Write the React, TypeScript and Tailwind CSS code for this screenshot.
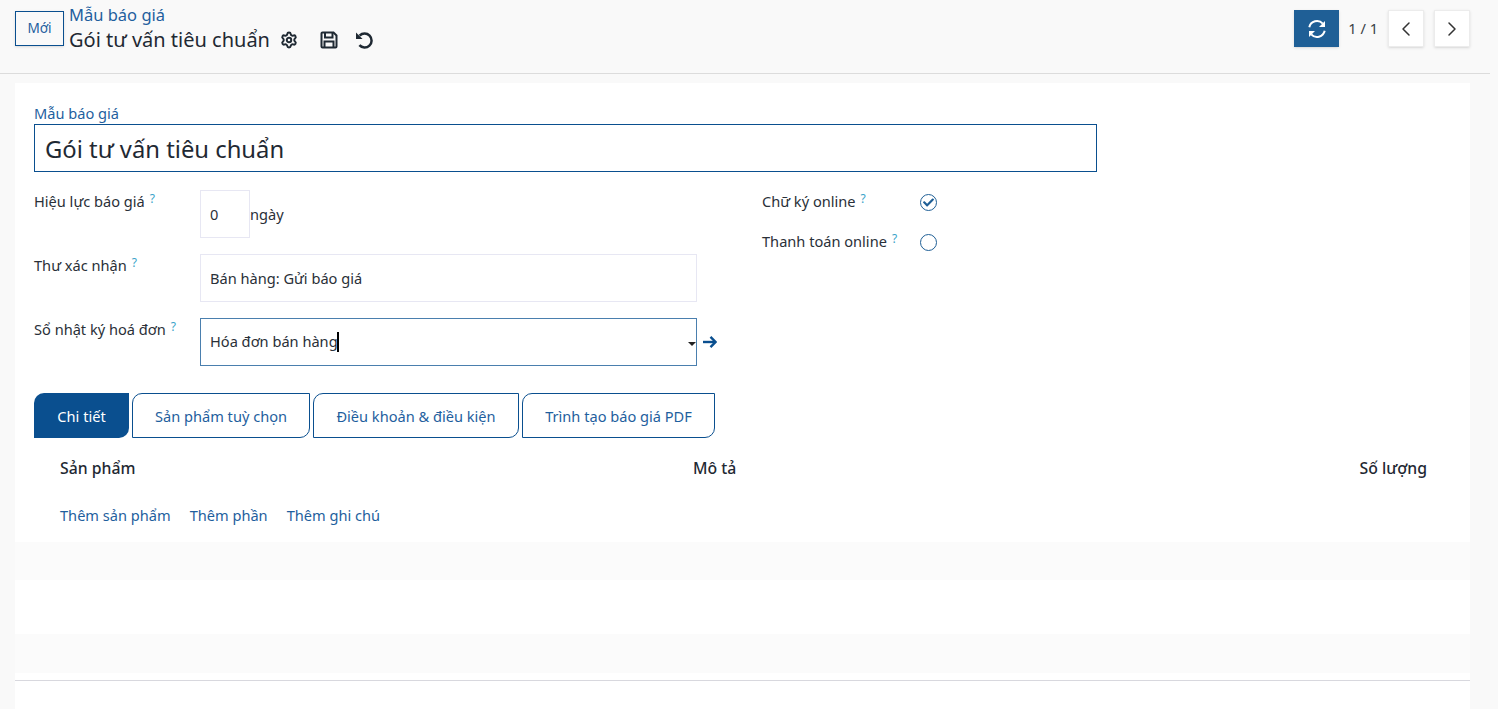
import { ChevronLeft, ChevronRight, Settings } from "lucide-react";
import { FaCheck } from "react-icons/fa";

const tabs = [
  { label: "Sản phẩm tuỳ chọn", width: "w-[178px]" },
  { label: "Điều khoản & điều kiện", width: "w-[206px]" },
  { label: "Trình tạo báo giá PDF", width: "w-[193px]" },
];

function Help() {
  return <sup className="ml-[5px] text-[12px] text-[#3ba3c9] leading-none relative -top-[4px]">?</sup>;
}

function SaveIcon() {
  return (
    <svg width="18" height="18" viewBox="0 0 18 18" fill="none" stroke="#1f2933" strokeWidth="2" className="ml-[22px]">
      <path d="M2.5 1.5h11l3 3v11a1 1 0 0 1-1 1h-13a1 1 0 0 1-1-1v-13a1 1 0 0 1 1-1z" />
      <path d="M5 2v4.5h7.5V2" />
      <path d="M4.5 16.5v-6h9v6" />
    </svg>
  );
}

function UndoIcon() {
  return (
    <svg width="18" height="18" viewBox="0 0 18 18" fill="none" className="ml-[17px]">
      <path d="M4.6 4.6A7 7 0 1 1 4.4 14.2" stroke="#1f2933" strokeWidth="2.5" />
      <path d="M1 1.5v6.6h6.6z" fill="#1f2933" />
    </svg>
  );
}

function RefreshIcon() {
  return (
    <svg width="20" height="20" viewBox="0 0 20 20" fill="none">
      <path d="M2.3 8.2A7.9 7.9 0 0 1 15.8 4.6" stroke="#fff" strokeWidth="2" />
      <path d="M17.7 11.8A7.9 7.9 0 0 1 4.2 15.4" stroke="#fff" strokeWidth="2" />
      <path d="M18 2v6h-6z" fill="#fff" />
      <path d="M2 18v-6h6z" fill="#fff" />
    </svg>
  );
}

function Header() {
  return (
    <header className="h-[74px] w-[1490px] border-b border-[#dcdcdc] flex items-start pl-[15px] pr-[20px]">
      <button className="mt-[11px] w-[49px] h-[35px] border border-[#0a4f8f] text-[13.6px] text-[#1f5f9e] shadow-sm">Mới</button>
      <div className="ml-[5px] mt-[4px]">
        <div className="text-[16.5px] leading-[22px] text-[#1f5f9e]">Mẫu báo giá</div>
        <div className="flex items-center h-[28px] text-[20px] text-[#1f2933]">
          <span>Gói tư vấn tiêu chuẩn</span>
          <Settings size={18} strokeWidth={2.6} className="ml-[10px] text-[#1f2933]" />
          <SaveIcon />
          <UndoIcon />
        </div>
      </div>
      <div className="ml-auto mt-[10px] flex items-center">
        <button className="w-[45px] h-[37px] bg-[#1f5f96] flex items-center justify-center shadow-sm">
          <RefreshIcon />
        </button>
        <span className="ml-[9px] text-[14.6px] text-[#3a3f46]">1 / 1</span>
        <button className="ml-[10px] w-[36px] h-[37px] bg-white border border-[#ececec] flex items-center justify-center shadow-sm">
          <ChevronLeft size={24} strokeWidth={1.5} className="text-[#333]" />
        </button>
        <button className="ml-[10px] w-[36px] h-[37px] bg-white border border-[#ececec] flex items-center justify-center shadow-sm">
          <ChevronRight size={24} strokeWidth={1.5} className="text-[#333]" />
        </button>
      </div>
    </header>
  );
}

function FormFields() {
  return (
    <div className="flex mt-[18px] text-[14.6px] text-[#2a3038]">
      <div className="w-[728px] flex flex-col gap-[16px] shrink-0">
        <div className="flex items-start">
          <label className="w-[166px] pt-[1px] leading-[20px]">Hiệu lực báo giá<Help /></label>
          <div className="w-[50px] h-[48px] border border-[#e7e7f3] pl-[9px] pt-[2px] flex items-center">0</div>
          <span className="self-center pt-[2px]">ngày</span>
        </div>
        <div className="flex items-start">
          <label className="w-[166px] pt-[1px] leading-[20px]">Thư xác nhận<Help /></label>
          <div className="w-[497px] h-[48px] border border-[#e7e7f3] pl-[9px] pt-[2px] flex items-center">Bán hàng: Gửi báo giá</div>
        </div>
        <div className="flex items-start">
          <label className="w-[166px] pt-[1px] leading-[20px]">Sổ nhật ký hoá đơn<Help /></label>
          <div className="relative w-[497px] h-[48px] border border-[#4a7fae] pl-[9px] flex items-center">
            <span>Hóa đơn bán hàng</span>
            <span className="w-[2px] h-[20px] bg-black -ml-[1px]"></span>
            <span className="absolute right-[0px] top-[23px] border-x-[4px] border-t-[4px] border-x-transparent border-t-[#222]"></span>
          </div>
          <svg width="14" height="14" viewBox="0 0 14 14" fill="none" stroke="#0a4f8f" strokeWidth="2.4" className="ml-[6px] self-center">
            <path d="M0 7h12" />
            <path d="M7.5 1.8L12.5 7l-5 5.2" />
          </svg>
        </div>
      </div>
      <div className="flex flex-col">
        <div className="flex items-center h-[24px]">
          <label className="w-[158px]">Chữ ký online<Help /></label>
          <span className="w-[17px] h-[17px] rounded-full border-[1.5px] border-[#1f5f96] flex items-center justify-center">
            <FaCheck size={11} className="text-[#1f5f96]" />
          </span>
        </div>
        <div className="flex items-center h-[24px] mt-[16px]">
          <label className="w-[158px]">Thanh toán online<Help /></label>
          <span className="w-[17px] h-[17px] rounded-full border-[1.5px] border-[#1f5f96]"></span>
        </div>
      </div>
    </div>
  );
}

function Tabs() {
  return (
    <div className="flex gap-[3px] mt-[27px] text-[14.6px]">
      <div className="w-[95px] h-[45px] pt-[3px] bg-[#0a4f8f] rounded-tl-[10px] rounded-br-[10px] text-white flex items-center justify-center">Chi tiết</div>
      {tabs.map((t) => (
        <div key={t.label} className={`${t.width} h-[45px] pt-[3px] border border-[#0a4f8f] rounded-tl-[10px] rounded-br-[10px] text-[#1f5f9e] flex items-center justify-center`}>{t.label}</div>
      ))}
    </div>
  );
}

export default function App() {
  return (
    <div className="h-[709px] overflow-hidden bg-[#f9f9f9] font-['Noto_Sans',sans-serif]">
      <Header />
      <main className="mt-[9px] ml-[15px] w-[1455px] h-[626px] bg-white">
        <div className="pt-[20px] px-[19px]">
          <div className="text-[14.6px] leading-[20px] mb-[1px] text-[#1f5f9e]">Mẫu báo giá</div>
          <div className="w-[1063px] h-[48px] pt-[4px] border border-[#0a4f8f] pl-[10px] flex items-center text-[23.8px] text-[#1f2933]">Gói tư vấn tiêu chuẩn</div>
          <FormFields />
          <Tabs />
        </div>
        <div className="flex h-[60px] pt-[2px] items-center pl-[45px] pr-[43px] text-[15.8px] font-medium text-[#1f2933]">
          <span className="w-[633px]">Sản phẩm</span>
          <span>Mô tả</span>
          <span className="ml-auto">Số lượng</span>
        </div>
        <div className="flex gap-[19px] h-[44px] pl-[45px] items-start text-[14.6px] leading-[34px] text-[#1f5f9e]">
          <span>Thêm sản phẩm</span>
          <span>Thêm phần</span>
          <span>Thêm ghi chú</span>
        </div>
        <div className="h-[38px] bg-[#fbfbfb]"></div>
        <div className="h-[54px]"></div>
        <div className="h-[39px] bg-[#fbfbfb]"></div>
        <div className="mt-[7px] border-t border-[#d8d8de]"></div>
      </main>
    </div>
  );
}
